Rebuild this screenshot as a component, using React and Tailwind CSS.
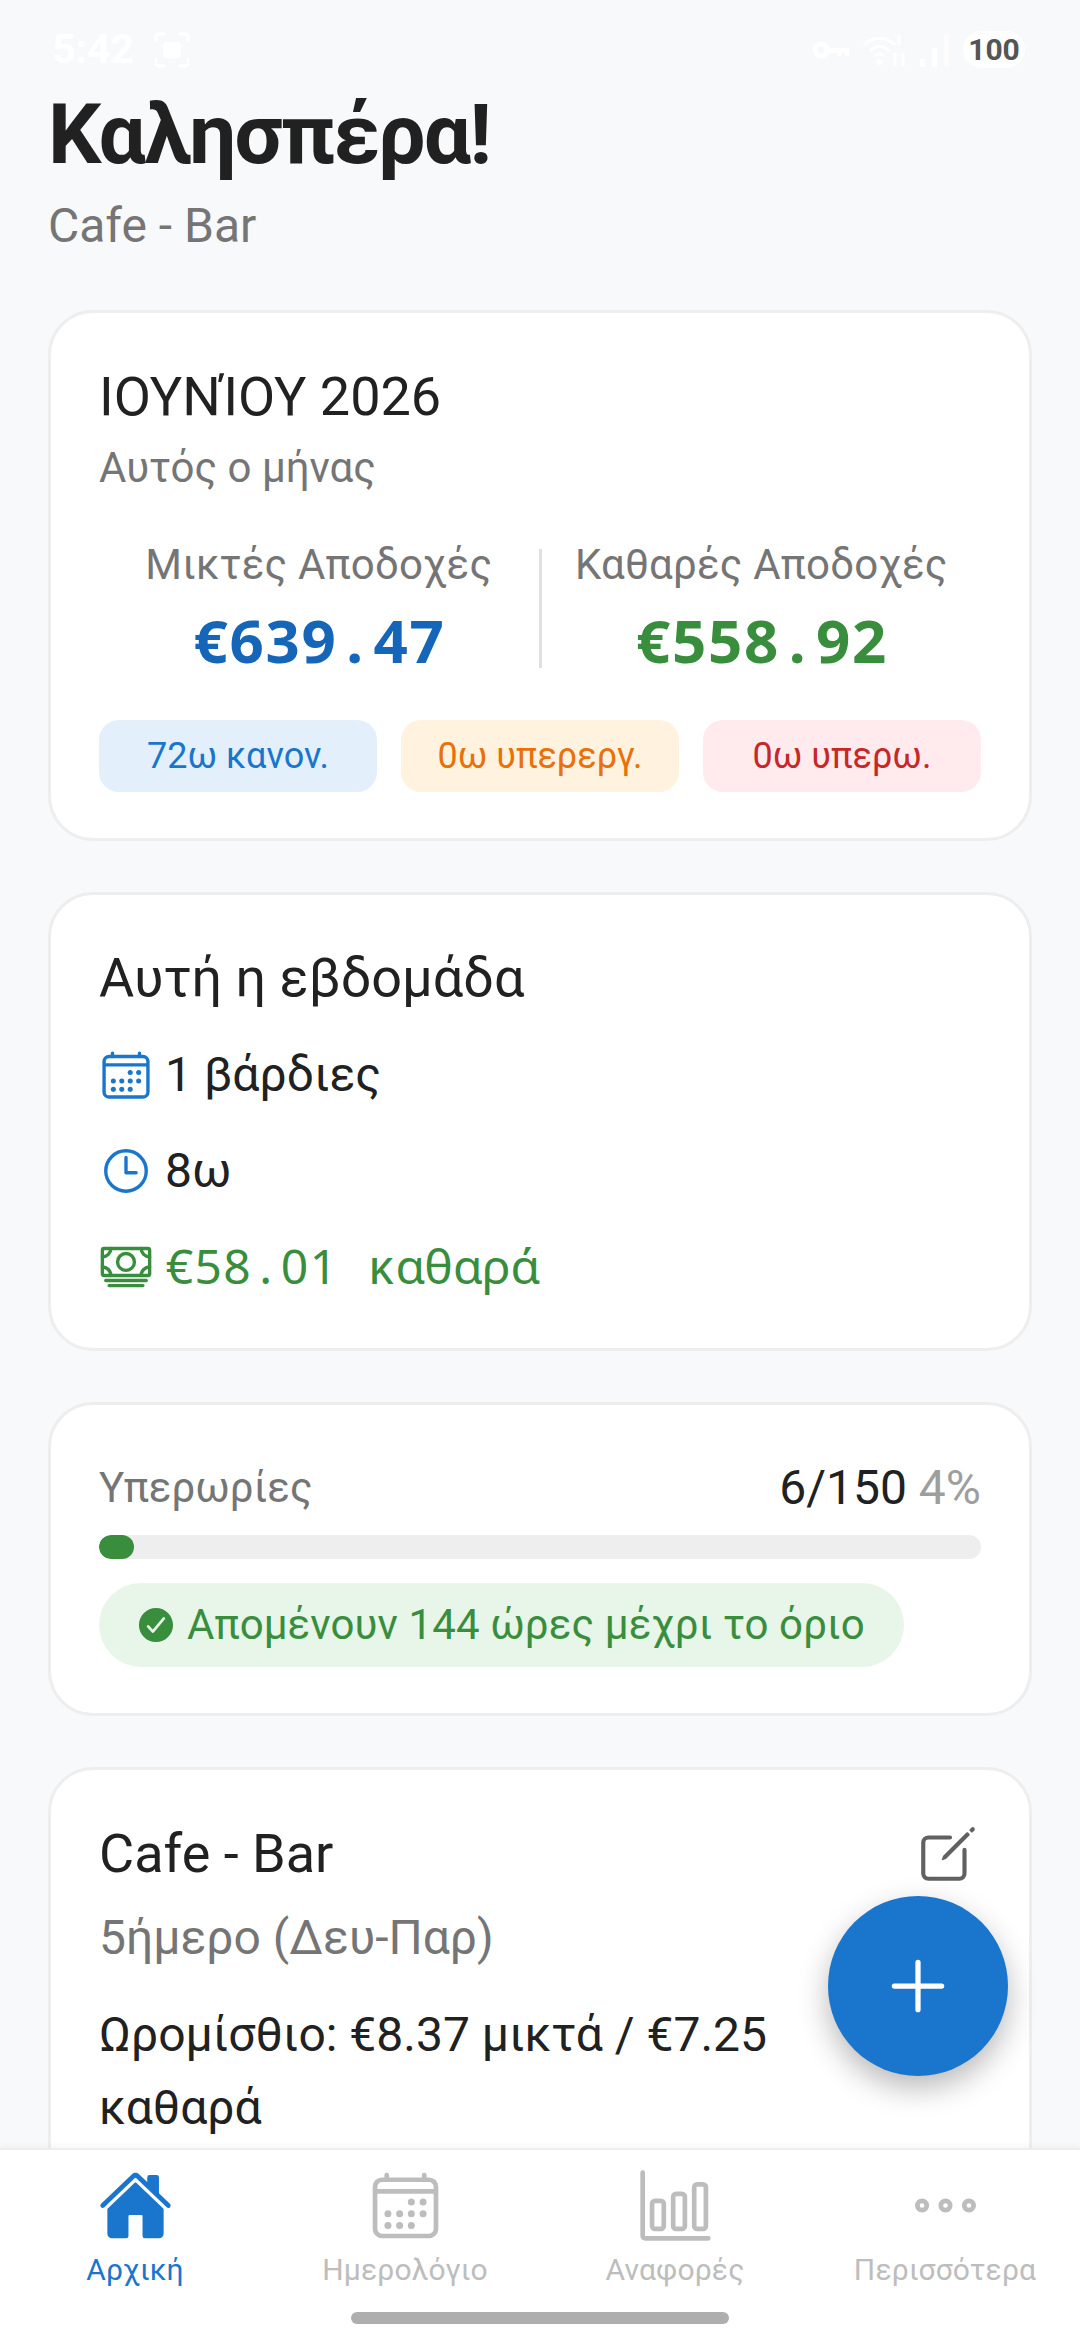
import {
  IoAdd,
  IoBarChartOutline,
  IoCalendarOutline,
  IoCashOutline,
  IoCheckmarkCircle,
  IoCreateOutline,
  IoEllipsisHorizontalOutline,
  IoHome,
  IoTimeOutline,
} from "react-icons/io5";

function StatusBar() {
  return (
    <div className="flex h-[81px] shrink-0 items-start justify-between pl-[52px] pr-[55px] pt-[31px]">
      <div className="flex items-center gap-[20px] text-white">
        <span className="text-[41px] font-bold leading-[37px]">5:42</span>
        <svg width="36" height="36" viewBox="0 0 36 36" fill="none" stroke="currentColor" strokeWidth="3" strokeLinecap="round">
          <path d="M2 9V5a3 3 0 013-3h5M26 2h5a3 3 0 013 3v4M34 27v4a3 3 0 01-3 3h-5M10 34H5a3 3 0 01-3-3v-4" />
          <rect x="9" y="10" width="18" height="16" rx="3" fill="currentColor" stroke="none" />
        </svg>
      </div>
      <div className="flex items-center text-white">
        <svg width="38" height="18" viewBox="0 0 38 18" fill="none" className="mr-[12px]">
          <circle cx="9" cy="9" r="6" stroke="currentColor" strokeWidth="5" />
          <path d="M16 7h21v8h-4v-3h-3v3h-5v-3h-9z" fill="currentColor" />
        </svg>
        <svg width="46" height="34" viewBox="0 0 46 34" fill="none" stroke="currentColor" strokeWidth="3" className="mr-[12px]">
          <path d="M2 12c9-9 22-9 31 0M8 18c6-6 13-6 19 0M13 23c3-3 6-3 9 0" />
          <circle cx="17.500" cy="29" r="3" fill="currentColor" stroke="none" />
          <path d="M33 33V20M41 33V20M37 2v10" />
        </svg>
        <svg width="30" height="34" viewBox="0 0 30 34" fill="currentColor" className="mr-[13px]">
          <rect x="0" y="26" width="5" height="8" rx="1" />
          <rect x="12" y="15" width="5" height="19" rx="1" />
          <rect x="24" y="1" width="5" height="33" rx="1" opacity="0.5" />
        </svg>
        <span className="flex h-[37px] w-[62px] items-center justify-center rounded-full bg-white text-[30px] font-bold leading-none text-[#555555]">
          100
        </span>
      </div>
    </div>
  );
}

function Card({ className = "", children }) {
  return (
    <div className={`rounded-[45px] border-[3px] border-[#eeeeee] bg-white px-[48px] ${className}`}>
      {children}
    </div>
  );
}

function Chip({ className, children }) {
  return (
    <div className={`flex h-[72px] flex-1 items-center justify-center rounded-[20px] text-[36px] leading-none ${className}`}>
      {children}
    </div>
  );
}

// the app's monospace font isn't installed, so each character gets its own fixed cell
function Mono({ text }) {
  return (
    <span className="font-['Noto_Sans',sans-serif]">
      {text.split("").map((ch, i) => (
        <span key={i} className="inline-block w-[0.6em] whitespace-pre text-center">
          {ch}
        </span>
      ))}
    </span>
  );
}

function Stat({ label, value, color }) {
  return (
    <div className="flex flex-1 flex-col items-center">
      <span className="text-[42px] leading-[54px] tracking-[0.2px] text-[#757575]">{label}</span>
      <span className={`mt-[12px] text-[60px] font-bold leading-[72px] ${color}`}>
        <Mono text={value} />
      </span>
    </div>
  );
}

function WeekRow({ icon: Icon, color, children }) {
  return (
    <div className={`flex h-[96px] items-center gap-[12px] ${color}`}>
      <Icon size={54} className="shrink-0 text-inherit" />
      <span className="text-[48px] leading-[72px]">{children}</span>
    </div>
  );
}

function NavItem({ icon: Icon, label, active }) {
  return (
    <div className={`flex flex-1 flex-col items-center ${active ? "text-[#1976cc]" : "text-[#bdbdbd]"}`}>
      <Icon size={75} />
      <span className="mt-[3px] text-[30px] leading-[48px] tracking-[0.15px]">{label}</span>
    </div>
  );
}

export default function App() {
  return (
    <div className="flex h-[2340px] flex-col overflow-hidden bg-[#f8f9fb] font-[Roboto,sans-serif] text-[#212121]">
      <div className="relative min-h-0 flex-1 overflow-hidden">
        <StatusBar />
        <div className="px-[48px]">
          <h1 className="text-[84px] font-bold leading-[108px] tracking-[-1.8px]">Καλησπέρα!</h1>
          <p className="mt-[7px] text-[48px] leading-[60px] text-[#757575]">Cafe - Bar</p>

          <Card className="mt-[54px] h-[531px] pt-[48px]">
            <h2 className="text-[54px] leading-[72px]">ΙΟΥΝΊΟΥ 2026</h2>
            <p className="mt-[8px] text-[42px] leading-[54px] text-[#757575]">Αυτός ο μήνας</p>
            <div className="mt-[43px] flex items-stretch">
              <Stat label="Μικτές Αποδοχές" value="€639.47" color="text-[#1565b8]" />
              <div className="h-[119px] w-[3px] self-center bg-[#e0e0e0]" />
              <Stat label="Καθαρές Αποδοχές" value="€558.92" color="text-[#388e3c]" />
            </div>
            <div className="mt-[41px] flex gap-[24px]">
              <Chip className="bg-[#e3f0fc] text-[#1976cc]">72ω κανον.</Chip>
              <Chip className="bg-[#fff3e0] text-[#e8710a]">0ω υπερεργ.</Chip>
              <Chip className="bg-[#ffebee] text-[#c62828]">0ω υπερω.</Chip>
            </div>
          </Card>

          <Card className="mt-[51px] h-[459px] pt-[47px]">
            <h2 className="text-[54px] leading-[72px]">Αυτή η εβδομάδα</h2>
            <div className="mt-[13px]">
              <WeekRow icon={IoCalendarOutline} color="text-[#1976cc]">
                <span className="text-[#212121]">1 βάρδιες</span>
              </WeekRow>
              <WeekRow icon={IoTimeOutline} color="text-[#1976cc]">
                <span className="text-[#212121]">8ω</span>
              </WeekRow>
              <WeekRow icon={IoCashOutline} color="text-[#388e3c]">
                <Mono text="€58.01 καθαρά" />
              </WeekRow>
            </div>
          </Card>

          <Card className="mt-[51px] h-[314px] pt-[47px]">
            <div className="flex items-center justify-between">
              <span className="text-[42px] leading-[72px] text-[#757575]">Υπερωρίες</span>
              <span className="text-[48px] leading-[72px]">
                6/150 <span className="text-[#9e9e9e]">4%</span>
              </span>
            </div>
            <div className="mt-[11px] h-[24px] overflow-hidden rounded-full bg-[#eeeeee]">
              <div className="h-full rounded-full bg-[#388e3c]" style={{ width: "4%" }} />
            </div>
            <div className="mt-[24px] flex h-[84px] w-fit items-center gap-[10px] rounded-full bg-[#e8f5e9] pl-[36px] pr-[39px] text-[#388e3c]">
              <IoCheckmarkCircle size={42} />
              <span className="text-[42px] leading-none tracking-[0.1px]">Απομένουν 144 ώρες μέχρι το όριο</span>
            </div>
          </Card>

          <Card className="mt-[51px] pt-[48px]">
            <div className="flex items-center justify-between">
              <h2 className="text-[54px] leading-[72px]">Cafe - Bar</h2>
              <IoCreateOutline size={66} className="text-[#616161]" />
            </div>
            <p className="mt-[12px] text-[48px] leading-[72px] text-[#757575]">5ήμερο (Δευ-Παρ)</p>
            <p className="mt-[24px] max-w-[720px] text-[48px] leading-[73px]">Ωρομίσθιο: €8.37 μικτά / €7.25 καθαρά</p>
            <div className="h-[60px]" />
          </Card>
        </div>

        <button className="absolute left-[828px] top-[1896px] flex h-[180px] w-[180px] items-center justify-center rounded-full bg-[#1976cc] text-white shadow-[0_12px_30px_rgba(0,0,0,0.28)]">
          <IoAdd size={84} />
        </button>
      </div>

      <div className="relative h-[192px] shrink-0 border-t-2 border-[#eeeeee] bg-white pt-[18px] shadow-[0_-3px_6px_rgba(0,0,0,0.03)]">
        <div className="flex">
          <NavItem icon={IoHome} label="Αρχική" active />
          <NavItem icon={IoCalendarOutline} label="Ημερολόγιο" />
          <NavItem icon={IoBarChartOutline} label="Αναφορές" />
          <NavItem icon={IoEllipsisHorizontalOutline} label="Περισσότερα" />
        </div>
        <div className="absolute bottom-[16px] left-[351px] h-[12px] w-[378px] rounded-full bg-[#aeaeae]" />
      </div>
    </div>
  );
}
